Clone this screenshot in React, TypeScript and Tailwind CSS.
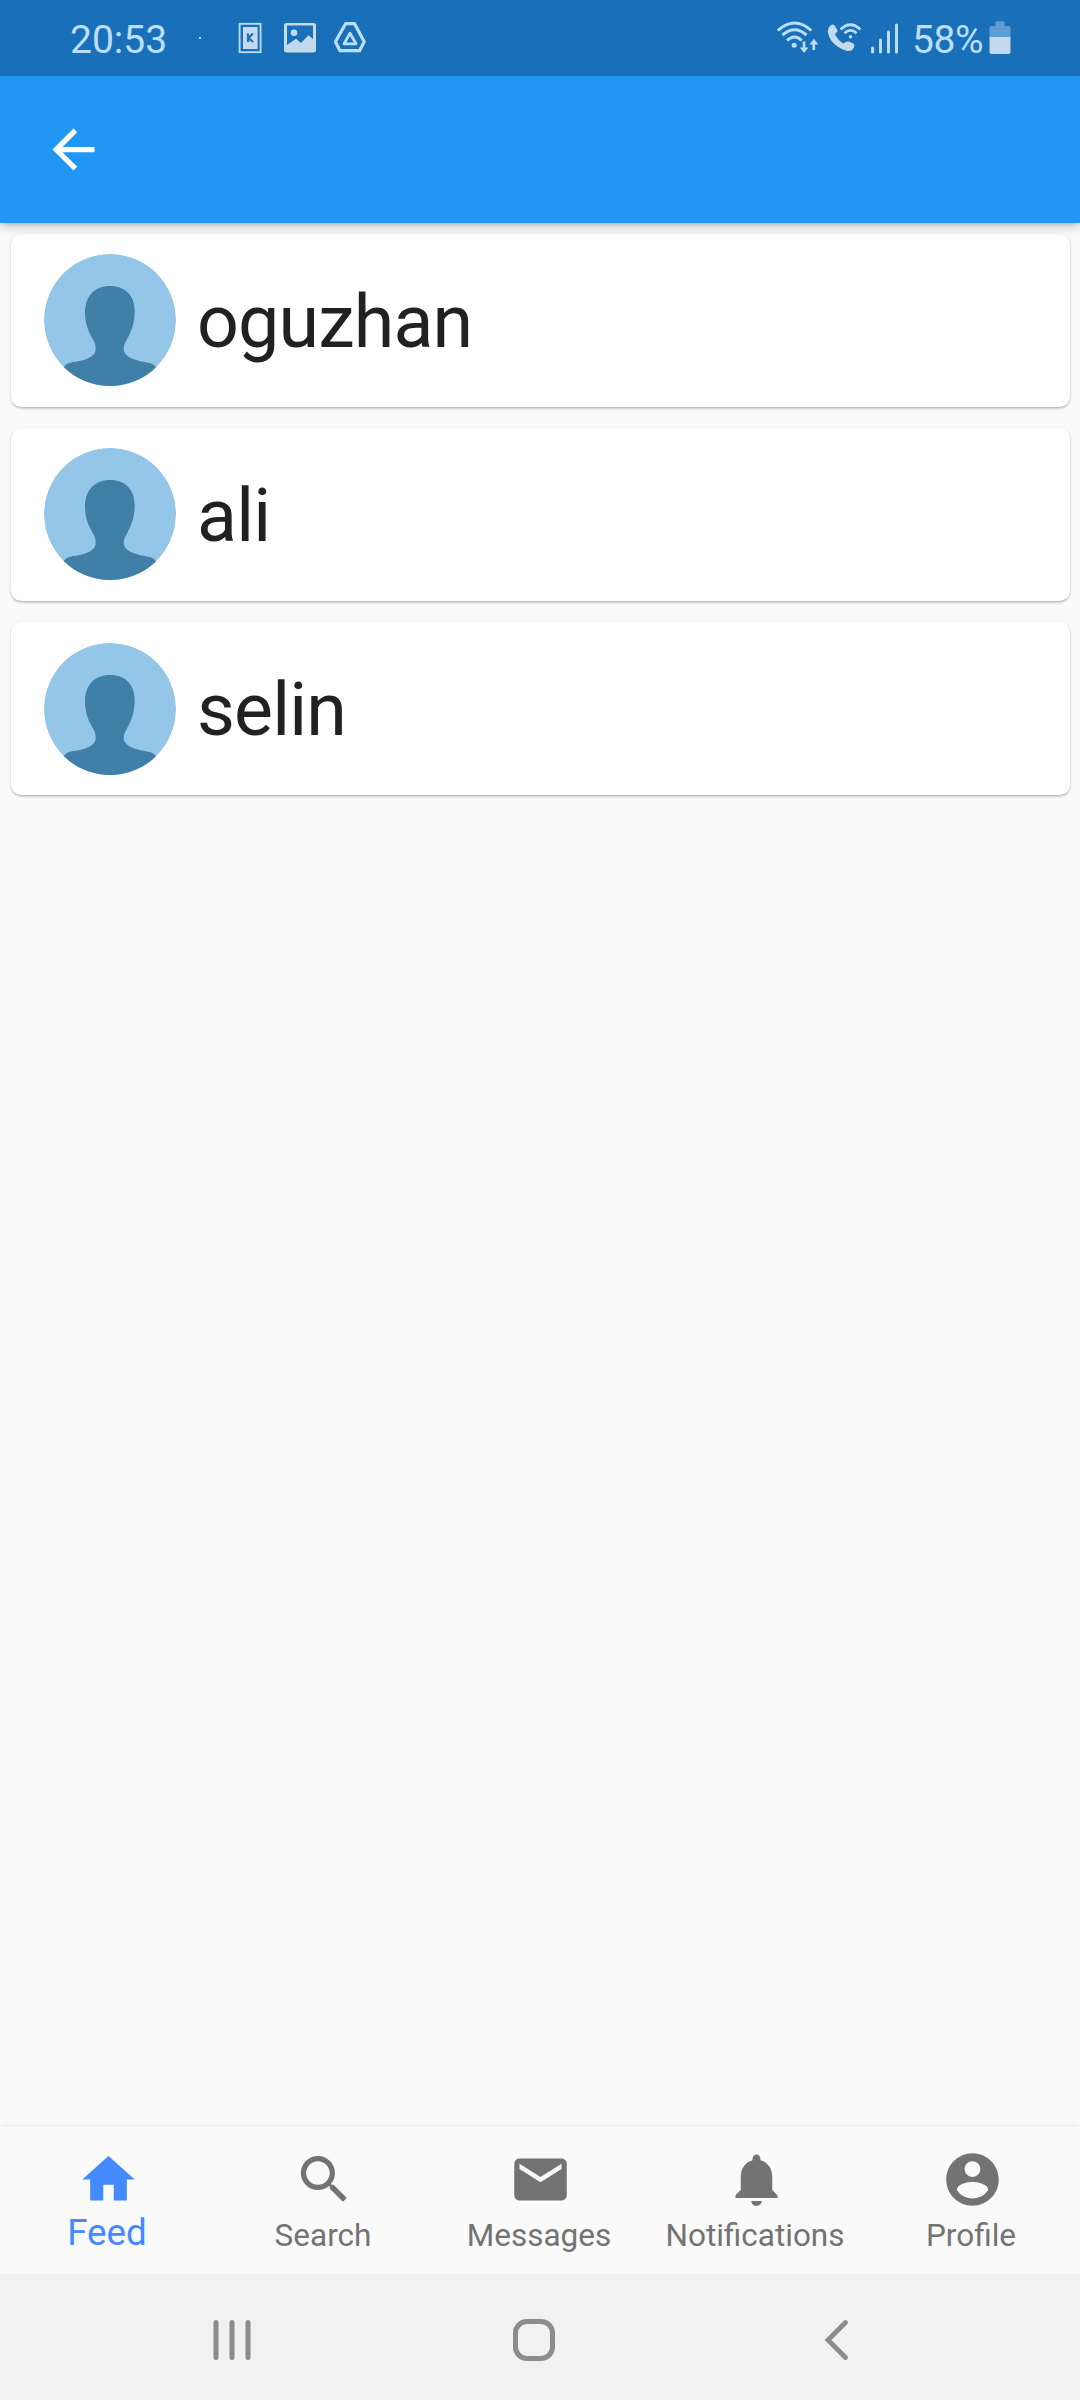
import React from "react";

const people = ["oguzhan", "ali", "selin"];

const tabs = [
  { label: "Feed", path: "M10 20v-6h4v6h5v-8h3L12 3 2 12h3v8z" },
  {
    label: "Search",
    path: "M15.5 14h-.79l-.28-.27C15.41 12.59 16 11.11 16 9.5 16 5.91 13.09 3 9.5 3S3 5.91 3 9.5 5.91 16 9.5 16c1.61 0 3.09-.59 4.23-1.57l.27.28v.79l5 4.99L20.49 19l-4.99-5zm-6 0C7.01 14 5 11.99 5 9.5S7.01 5 9.5 5 14 7.01 14 9.5 11.99 14 9.5 14z",
  },
  {
    label: "Messages",
    path: "M20 4H4c-1.1 0-1.99.9-1.99 2L2 18c0 1.1.9 2 2 2h16c1.1 0 2-.9 2-2V6c0-1.1-.9-2-2-2zm0 4l-8 5-8-5V6l8 5 8-5v2z",
  },
  {
    label: "Notifications",
    path: "M12 22c1.1 0 2-.9 2-1.85h-4c0 .95.89 1.85 2 1.85zm6-6v-5c0-3.07-1.64-5.64-4.5-6.32V4c0-.83-.67-1.5-1.5-1.5s-1.5.67-1.5 1.5v.68C7.63 5.36 6 7.92 6 11v5l-2 2v1h16v-1l-2-2z",
  },
  {
    label: "Profile",
    path: "M12 2C6.48 2 2 6.48 2 12s4.48 10 10 10 10-4.48 10-10S17.52 2 12 2zm0 3c1.66 0 3 1.34 3 3s-1.34 3-3 3-3-1.34-3-3 1.34-3 3-3zm0 14.2c-2.5 0-4.71-1.28-6-3.22.03-1.99 4-3.08 6-3.08 1.99 0 5.97 1.09 6 3.08-1.29 1.94-3.5 3.22-6 3.22z",
  },
];

function StatusBar() {
  return (
    <div className="flex h-[76px] shrink-0 items-center bg-[#1a70b8] pl-[70px] pr-[69.5px] text-[39px] leading-[76px] text-[#bbdefb]">
      <span className="w-[97px] pt-[4px]">20:53</span>
      <span className="ml-[32px] size-[2px] bg-[#bbdefb]" />
      <svg className="ml-[37px] h-[76px] w-[24px]" viewBox="238 0 24 76" fill="none">
        <rect x="239.6" y="23.8" width="21" height="28.4" stroke="#bbdefb" strokeWidth="1.8" />
        <rect x="243" y="27" width="14.6" height="22" fill="#c3d9ee" />
        <path d="M248 33.5v8.5M253 33.5l-4.5 4.5 4.5 4" stroke="#1a70b8" strokeWidth="2.2" />
      </svg>
      <svg className="ml-[22px] h-[76px] w-[32px]" viewBox="284 0 32 76">
        <rect x="284" y="23" width="32" height="29.5" rx="2.5" fill="#c3d9ee" />
        <path d="M287 25.500h26v13.500l-4.500-3.700-7.500 7.700-5-4.200-9 6.200z" fill="#1a70b8" />
        <circle cx="294" cy="32.8" r="3.3" fill="#c3d9ee" />
      </svg>
      <svg className="ml-[18px] h-[76px] w-[32px]" viewBox="334 0 32 76" fill="none" stroke="#bbdefb" strokeLinejoin="round">
        <path d="M345.6 23.7h9l9.6 18-4.6 9H340l-4.6-9z" strokeWidth="3.2" />
        <path d="M350 33.3l-6 10.5h12z" strokeWidth="2.8" />
      </svg>
      <svg className="ml-auto h-[76px] w-[43px]" viewBox="775 0 43 76" fill="none" stroke="#bbdefb" strokeWidth="3" strokeLinecap="butt">
        <path d="M776.8 30.5Q793.500 15.500 810.300 30.500" />
        <path d="M781.500 35Q793.500 24.500 805.500 35" />
        <path d="M786 40.500Q793.500 33.500 800.700 40.500" />
        <circle cx="793.2" cy="45.2" r="2.5" fill="#bbdefb" stroke="none" />
        <path d="M803 41.500v7M812.800 50v-8" strokeWidth="2.6" />
        <path d="M798.800 47.500h8.600l-4.300 5.500zM808.500 44.500h8.800l-4.400-5.800z" fill="#bbdefb" stroke="none" />
      </svg>
      <svg className="ml-[8px] h-[76px] w-[35px]" viewBox="826 0 35 76" fill="none">
        <path
          d="M829.500 25.500Q832 23.500 833.800 25.700L836.300 30Q837 31.600 835.300 32.800L834 34.300Q837 40.500 842.500 43.500L844.500 42Q845.800 41 847.500 41.600L852.300 43.500Q854.200 45 853 47.500Q850.500 52.500 844.500 50.500Q829 45 826.800 31.500Q827 27.500 829.500 25.500Z"
          fill="#c3d9ee"
        />
        <path d="M839.500 29.500Q849.500 20 859.300 29.500M843.500 33.200Q849.500 27.500 855.600 33.200" stroke="#bbdefb" strokeWidth="2.7" />
        <circle cx="849.5" cy="36.700" r="1.700" fill="#bbdefb" />
      </svg>
      <svg className="ml-[8px] h-[76px] w-[29px]" viewBox="869 0 29 76" stroke="#bbdefb" strokeWidth="3" strokeLinecap="round">
        <path d="M871.6 48v4M879.5 40v12M887.500 32v20M895.500 25v27" />
      </svg>
      <span className="ml-[13px] w-[74px] whitespace-nowrap pt-[4px] tracking-[-0.4px]">58%</span>
      <svg className="ml-[2.5px] h-[76px] w-[22px]" viewBox="988.500 0 22 76">
        <path d="M995 21.500h9v4.500h4q2 0 2 2v9h-21v-9q0-2 2-2h4z" fill="#5f9cd0" />
        <path d="M989 37h21v15q0 2-2 2h-17q-2 0-2-2z" fill="#c3d9ee" />
      </svg>
    </div>
  );
}

function Avatar() {
  return (
    <svg className="size-[132px] shrink-0 rounded-full" viewBox="133 101 396 396">
      <circle cx="331" cy="299" r="198" fill="#94c6e8" />
      <path
        d="M331 197C377 197 405 226 405 272C405 312 394 335 381 359C375 370 372 376 372 386C373 412 410 421 445 427C458 429 463 432 470 443V500H190V443C198 432 204 429 217 426C252 421 288 412 288 386C288 378 287 370 281 359C267 335 256 312 256 275C257 226 286 197 331 197Z"
        fill="#3f7fa8"
      />
    </svg>
  );
}

export default function App() {
  return (
    <div className="flex h-[2400px] w-[1080px] flex-col overflow-hidden bg-[#fafafa] font-['Roboto',sans-serif]">
      <StatusBar />
      <header className="relative z-10 flex h-[147px] shrink-0 items-center bg-[#2196f3] pl-[42px] shadow-[0_5px_10px_-1px_rgba(0,0,0,0.2),0_1px_4px_rgba(0,0,0,0.15)]">
        <svg className="size-[63px]" viewBox="0 0 24 24" fill="white">
          <path d="M20 11H7.830l5.590-5.590L12 4l-8 8 8 8 1.410-1.410L7.830 13H20v-2z" />
        </svg>
      </header>
      <main className="flex grow flex-col gap-[21px] px-[10.5px] pt-[10.5px]">
        {people.map((name) => (
          <div
            key={name}
            className="flex h-[173.25px] items-center rounded-[10.5px] bg-white pl-[33.500px] text-[73.5px] tracking-[-0.85px] text-[#212121] shadow-[0_2px_3px_-1px_rgba(0,0,0,0.22),0_1px_3px_rgba(0,0,0,0.16)]"
          >
            <Avatar />
            <span className="ml-[21px] pt-[3px] leading-[86px]">{name}</span>
          </div>
        ))}
      </main>
      <nav className="grid h-[147px] shrink-0 grid-cols-5 bg-[#fafafa] shadow-[0_-1px_8px_rgba(0,0,0,0.07)]">
        {tabs.map((tab, i) => (
          <div
            key={tab.label}
            className={
              i === 0
                ? "flex flex-col items-center pt-[21px] text-[36.75px] text-[#448aff]"
                : "flex flex-col items-center pt-[21px] text-[31.5px] text-[#737373]"
            }
          >
            <svg className="size-[63px]" viewBox="0 0 24 24" fill="currentColor">
              <path d={tab.path} />
            </svg>
            <span className={i === 0 ? "pr-[2px] leading-[43px]" : "mt-[4px] pr-[2px] leading-[42px]"}>{tab.label}</span>
          </div>
        ))}
      </nav>
      <footer className="flex h-[126px] shrink-0 items-center bg-[#f1f1f1] pl-[213px] pt-[6px]">
        <svg className="h-[42px] w-[38px]" viewBox="213 2319 38 42" stroke="#8c8c8c" strokeWidth="5" strokeLinecap="round">
          <path d="M216 2322.500v35M232 2322.500v35M248 2322.500v35" />
        </svg>
        <svg className="ml-[262px] size-[42px]" viewBox="0 0 42 42" fill="none" stroke="#8c8c8c" strokeWidth="5">
          <rect x="2.5" y="2.5" width="37" height="37" rx="11.500" />
        </svg>
        <svg className="ml-[269px] h-[42px] w-[26px]" viewBox="824 2319 26 42" fill="none" stroke="#8c8c8c" strokeWidth="4.800" strokeLinecap="round">
          <path d="M845.500 2322.500L828 2340l17.500 17.500" />
        </svg>
      </footer>
    </div>
  );
}
